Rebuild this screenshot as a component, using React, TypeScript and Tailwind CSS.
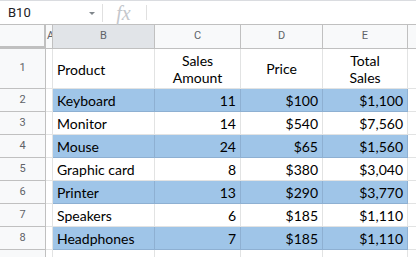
const rows: { n: number; name: string; qty: number; price: string; total: string; hl: boolean }[] = [
  { n: 2, name: 'Keyboard', qty: 11, price: '$100', total: '$1,100', hl: true },
  { n: 3, name: 'Monitor', qty: 14, price: '$540', total: '$7,560', hl: false },
  { n: 4, name: 'Mouse', qty: 24, price: '$65', total: '$1,560', hl: true },
  { n: 5, name: 'Graphic card', qty: 8, price: '$380', total: '$3,040', hl: false },
  { n: 6, name: 'Printer', qty: 13, price: '$290', total: '$3,770', hl: true },
  { n: 7, name: 'Speakers', qty: 6, price: '$185', total: '$1,110', hl: false },
  { n: 8, name: 'Headphones', qty: 7, price: '$185', total: '$1,110', hl: true },
]

const rowNum =
  'flex items-center justify-center bg-[#f8f9fa] border-r border-b border-[#c0c0c0] text-[11px] text-[#5f6368] font-["Roboto",sans-serif]'
const colHead =
  'flex items-center justify-center border-r border-b border-[#c0c0c0] text-[11px] text-[#5f6368] font-["Roboto",sans-serif]'

function Cell({ hl, right, children }: { hl?: boolean; right?: boolean; children?: React.ReactNode }) {
  return (
    <div
      className={
        'flex items-center overflow-hidden whitespace-nowrap px-[4px] pt-[1px] border-r border-b text-black ' +
        (right ? 'justify-end ' : '') +
        (hl ? 'bg-[#9fc5e8] border-[#8eb0d2]' : 'bg-white border-[#e2e3e3]')
      }
    >
      {children}
    </div>
  )
}

export default function App() {
  return (
    <div className="w-[416px] h-[257px] overflow-hidden bg-white font-['Lato',sans-serif] text-[14px]">
      {/* formula bar */}
      <div className="flex h-[25px] items-center border-t border-b border-[#dadce0] border-b-[#c0c0c0]">
        <div className="flex w-[102px] items-center justify-between pl-[8px] pr-[7px]">
          <span className="font-['Roboto',sans-serif] text-[13px] text-[#202124]">B10</span>
          <span className="mt-[1px] h-0 w-0 border-x-[3px] border-t-[3px] border-x-transparent border-t-[#80868b]" />
        </div>
        <div className="h-[18px] w-px bg-[#e0e0e0]" />
        <div className="flex w-[43px] justify-center pr-[2px]">
          <span className="font-['Liberation_Serif',serif] text-[20px] italic leading-none text-[#c4c7cc]">fx</span>
        </div>
        <div className="h-[15px] w-px bg-[#e0e0e0]" />
      </div>

      <div className="grid grid-cols-[46px_7px_102px_86px_82px_85px_1fr] grid-rows-[24px_40px_repeat(8,23px)]">
        {/* header row */}
        <div className="bg-[#f8f9fa] border-r-2 border-b-[3px] border-[#c0c0c0]" />
        <div className={colHead + ' bg-[#f8f9fa] !justify-start overflow-hidden pl-[1px]'}>A</div>
        <div className={colHead + ' bg-[#e1e4e8]'}>B</div>
        <div className={colHead + ' bg-[#f8f9fa]'}>C</div>
        <div className={colHead + ' bg-[#f8f9fa]'}>D</div>
        <div className={colHead + ' bg-[#f8f9fa]'}>E</div>
        <div className="bg-[#f8f9fa] border-b border-[#c0c0c0]" />

        {/* row 1 */}
        <div className={rowNum}>1</div>
        <div className="border-r border-b border-[#e2e3e3]" />
        <Cell>Product</Cell>
        <div className="flex flex-col items-center justify-center border-r border-b border-[#e2e3e3] leading-[17px]">
          <span>Sales</span>
          <span>Amount</span>
        </div>
        <div className="flex items-center justify-center border-r border-b border-[#e2e3e3]">Price</div>
        <div className="flex flex-col items-center justify-center border-r border-b border-[#e2e3e3] leading-[17px]">
          <span>Total</span>
          <span>Sales</span>
        </div>
        <div className="border-b border-[#e2e3e3]" />

        {rows.map((r) => (
          <div key={r.n} className="contents">
            <div className={rowNum}>{r.n}</div>
            <div className="border-r border-b border-[#e2e3e3]" />
            <Cell hl={r.hl}>{r.name}</Cell>
            <Cell hl={r.hl} right>
              {r.qty}
            </Cell>
            <Cell hl={r.hl} right>
              {r.price}
            </Cell>
            <Cell hl={r.hl} right>
              {r.total}
            </Cell>
            <div className="border-b border-[#e2e3e3]" />
          </div>
        ))}

        {/* row 9, cut off */}
        <div className={rowNum + ' !items-start pt-[4px]'}>9</div>
        <div className="border-r border-[#e2e3e3]" />
        <div className="border-r border-[#e2e3e3]" />
        <div className="border-r border-[#e2e3e3]" />
        <div className="border-r border-[#e2e3e3]" />
        <div className="border-r border-[#e2e3e3]" />
        <div />
      </div>
    </div>
  )
}
